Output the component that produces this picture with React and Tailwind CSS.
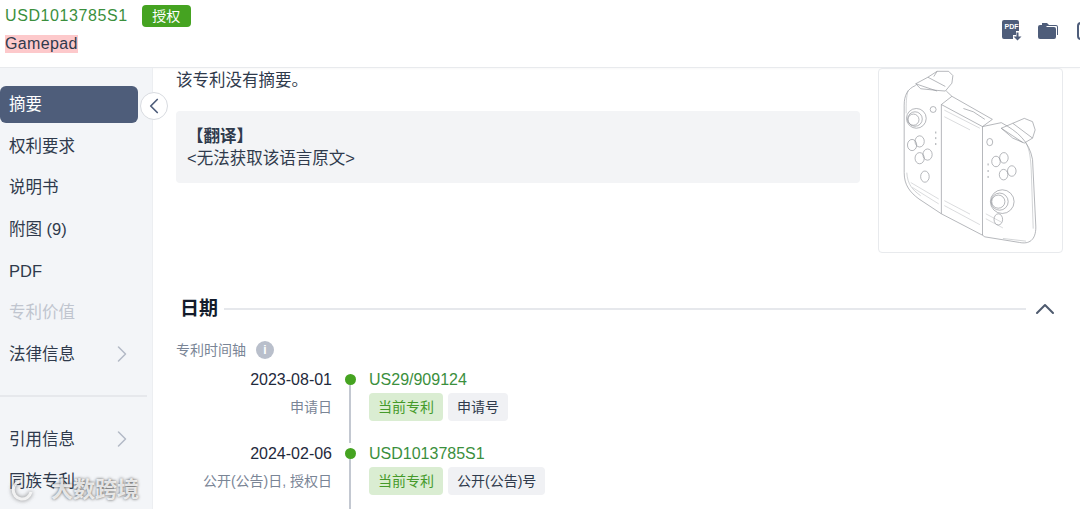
import { ChevronLeft, ChevronRight, ChevronUp } from 'lucide-react'

const navTop = [
    { label: '摘要', active: true },
    { label: '权利要求' },
    { label: '说明书' },
    { label: '附图 (9)' },
    { label: 'PDF' },
    { label: '专利价值', disabled: true },
    { label: '法律信息', arrow: true },
]

const timeline = [
    { date: '2023-08-01', type: '申请日', number: 'US29/909124', tag: '申请号' },
    { date: '2024-02-06', type: '公开(公告)日, 授权日', number: 'USD1013785S1', tag: '公开(公告)号' },
]

const NavItem = ({ item }) => {
    let color = 'text-[#2f3a4c]'
    if (item.active) color = 'bg-[#4e5d7a] text-white'
    if (item.disabled) color = 'text-[#c0c5cf]'
    return (
        <div className={`flex h-[37px] w-[138px] shrink-0 items-center justify-between rounded-md pl-[9px] pr-[2px] text-[16.5px] ${color}`}>
            <span>{item.label}</span>
            {item.arrow && <ChevronRight className="h-7 w-7 text-[#b4bac6]" strokeWidth={1.3} />}
        </div>
    )
}

const PdfIcon = () => (
    <svg width="20" height="21" viewBox="0 0 20 21">
        <path d="M2 0h13a2 2 0 0 1 2 2v9h-3v4h-3v4H2a2 2 0 0 1-2-2V2a2 2 0 0 1 2-2z" fill="#4e5d7a" />
        <text x="2.5" y="8.5" fill="#fff" fontSize="7" fontWeight="700" fontFamily="Liberation Sans, sans-serif">PDF</text>
        <path d="M14.5 12.5h2v4h3l-4 4-4-4h3z" fill="#4e5d7a" />
    </svg>
)

const FolderIcon = () => (
    <svg width="20" height="18" viewBox="0 0 20 18">
        <path d="M4 1h5l2 2h7a2 2 0 0 1 2 2v8h-1V5a1 1 0 0 0-1-1H4z" fill="#4e5d7a" />
        <path d="M2 3h5l2 2h7a2 2 0 0 1 2 2v8a2 2 0 0 1-2 2H2a2 2 0 0 1-2-2V5a2 2 0 0 1 2-2z" fill="#4e5d7a" />
    </svg>
)

const Gamepad = () => (
    <svg width="183" height="182" viewBox="25 25 553 553" fill="none" stroke="#8f9399" strokeWidth="2" strokeLinejoin="round">
        {/* left grip */}
        <path d="M135 75C110 85 100 105 100 135L100 340C100 378 118 400 145 420L213 465L213 133L245 108L228 92" />
        <path d="M112 90C106 110 106 130 106 160M108 340C110 375 125 392 150 410" strokeWidth="1.2" />
        <path d="M125 385L205 435M120 370L205 420" strokeWidth="1" />
        {/* center */}
        <path d="M213 133L338 200L338 530L213 465" />
        <path d="M245 108L368 178L338 200M280 145L310 155L345 178" />
        <path d="M222 150L330 205M222 170L300 210M222 440L330 498M222 425L300 466" strokeWidth="1" />
        {/* right grip */}
        <path d="M338 200L395 188C445 215 480 245 490 300L500 505C500 545 480 558 450 552L345 535L338 530" />
        <path d="M470 250C482 270 484 300 486 330L492 510M400 540L470 548" strokeWidth="1.2" />
        <path d="M348 480L400 508M348 465L395 490" strokeWidth="1" />
        {/* triggers */}
        <path d="M135 70L172 50L200 32L235 32L248 45L245 68L225 92L200 90L150 85Z" />
        <path d="M172 50L225 78M135 70L200 92M200 32L190 48" />
        <path d="M395 205L430 190L465 175L490 185L498 210L490 235L465 250L430 235Z" />
        <path d="M395 205L460 248M430 190L490 235" />
        {/* left stick */}
        <circle cx="137" cy="175" r="30" />
        <circle cx="133" cy="177" r="22" />
        <circle cx="128" cy="179" r="17" />
        <circle cx="188" cy="148" r="9" />
        {/* dpad */}
        <ellipse cx="147" cy="245" rx="14" ry="17" />
        <ellipse cx="124" cy="256" rx="14" ry="17" />
        <ellipse cx="171" cy="285" rx="14" ry="17" />
        <ellipse cx="147" cy="296" rx="14" ry="17" />
        <ellipse cx="163" cy="352" rx="13" ry="17" />
        <path d="M196 215v6M196 232v6M196 250v6" strokeWidth="2.5" />
        {/* right buttons */}
        <ellipse cx="360" cy="247" rx="9" ry="11" />
        <ellipse cx="379" cy="306" rx="13" ry="16" />
        <ellipse cx="403" cy="295" rx="13" ry="16" />
        <ellipse cx="402" cy="346" rx="13" ry="16" />
        <ellipse cx="427" cy="335" rx="13" ry="16" />
        <path d="M355 312v6M355 332v6M355 350v6" strokeWidth="2.5" />
        {/* right stick */}
        <circle cx="398" cy="428" r="36" />
        <circle cx="390" cy="428" r="26" />
        <circle cx="386" cy="428" r="20" />
        <ellipse cx="386" cy="482" rx="13" ry="17" />
    </svg>
)

const TimelineRow = ({ row }) => (
    <div className="flex h-[74px]">
        <div className="w-[156px] shrink-0 text-right">
            <div className="text-base leading-[22px] text-[#1f2a3c]">{row.date}</div>
            <div className="mt-[6px] text-sm leading-[20px] text-[#7a8596]">{row.type}</div>
        </div>
        <div className="flex w-[36px] shrink-0 flex-col items-center pt-[5px]">
            <div className="h-[11px] w-[11px] shrink-0 rounded-full bg-[#45a321]" />
            <div className="w-[2px] flex-1 bg-[#c3c8d1]" />
        </div>
        <div className="ml-[1px]">
            <div className="text-base leading-[22px] text-[#3b8f3d]">{row.number}</div>
            <div className="mt-[2px] flex gap-[5px] text-sm">
                <span className="flex h-[28px] items-center rounded bg-[#daedd2] px-[9px] text-[#459a2a]">当前专利</span>
                <span className="flex h-[28px] items-center rounded bg-[#f0f1f4] px-[9px] text-[#2f3a4c]">{row.tag}</span>
            </div>
        </div>
    </div>
)

export default function App() {
    return (
        <div className="relative flex h-[509px] w-[1080px] flex-col overflow-hidden bg-white font-['Liberation_Sans','Noto_Sans_CJK_SC',sans-serif]">
            <header className="flex h-[68px] shrink-0 justify-between overflow-hidden border-b border-[#e8eaed] pl-[5px] shadow-[0_1px_2px_rgba(0,0,0,0.03)]">
                <div>
                    <div className="flex h-[32px] items-center">
                        <span className="text-base tracking-[0.6px] text-[#3b8f3d]">USD1013785S1</span>
                        <span className="ml-[14px] flex h-[22px] w-[49px] items-center justify-center rounded-sm bg-[#45a321] text-sm text-white">授权</span>
                    </div>
                    <div className="mt-[3px] w-fit bg-[#fdc9cb] text-base leading-[18px] tracking-[0.35px] text-[#2f3a4c]">Gamepad</div>
                </div>
                <div className="mr-[-17px] flex items-center gap-[16px] pb-[6px]">
                    <PdfIcon />
                    <FolderIcon />
                    <div className="ml-[3px] h-[18px] w-[20px] rounded-sm border-2 border-[#4e5d7a]" />
                </div>
            </header>
            <div className="flex min-h-0 flex-1">
                <aside className="flex w-[153px] shrink-0 flex-col overflow-hidden border-r border-[#eceef1] bg-[#f3f5f8] pt-[18px]">
                    <div className="flex flex-col gap-[4.6px]">
                        {navTop.map(item => <NavItem key={item.label} item={item} />)}
                    </div>
                    <div className="mt-[22px] mb-[24px] h-[2px] w-[147px] shrink-0 bg-[#e6e8ec]" />
                    <div className="flex flex-col gap-[5px]">
                        <NavItem item={{ label: '引用信息', arrow: true }} />
                        <NavItem item={{ label: '同族专利' }} />
                    </div>
                </aside>
                <main className="min-w-0 flex-1 pl-[23px]">
                    <div className="flex">
                        <div className="w-[684px] shrink-0">
                            <p className="h-[43px] pt-[1px] text-[16.5px] leading-[22px] text-[#2f3a4c]">该专利没有摘要。</p>
                            <div className="h-[72px] rounded bg-[#f3f4f6] px-[11px] pt-[14px] text-[16.5px] leading-[22px] text-[#2f3a4c]">
                                <div className="font-bold">【翻译】</div>
                                <div>&lt;无法获取该语言原文&gt;</div>
                            </div>
                        </div>
                        <div className="ml-[18px] h-[185px] w-[185px] shrink-0 rounded border border-[#e8eaed]">
                            <Gamepad />
                        </div>
                    </div>
                    <div className="mt-[44px] flex h-[24px] items-center pl-[4px] pr-[19px]">
                        <h2 className="text-[19px] font-bold text-[#141c2b]">日期</h2>
                        <div className="ml-[6px] h-[2px] flex-1 bg-[#e6e8ec]" />
                        <ChevronUp className="ml-[3px] h-8 w-8 text-[#4e5a6e]" strokeWidth={1.5} />
                    </div>
                    <div className="mt-[18px] flex h-[22px] items-center gap-[10px] text-sm text-[#7a8596]">
                        <span>专利时间轴</span>
                        <span className="flex h-[18px] w-[18px] items-center justify-center rounded-full bg-[#b9bfcb] text-xs font-bold text-white">i</span>
                    </div>
                    <div className="mt-[8px]">
                        {timeline.map(row => <TimelineRow key={row.date} row={row} />)}
                    </div>
                </main>
            </div>
            {/* collapse button on the sidebar edge */}
            <button className="absolute left-[140px] top-[92px] flex h-[28px] w-[28px] items-center justify-center rounded-full border border-[#d8dbe0] bg-white text-[#4e5d7a]">
                <ChevronLeft className="h-[26px] w-[26px]" strokeWidth={1.6} />
            </button>
            {/* watermark */}
            <div className="absolute left-[10px] top-[475px] flex items-center gap-[17px] text-white/80 [text-shadow:0_0_3px_rgba(60,60,60,0.9)]">
                <svg className="drop-shadow-[0_0_2px_rgba(60,60,60,0.8)]" width="24" height="26" viewBox="0 0 24 26" fill="none" stroke="#fff" strokeOpacity="0.8" strokeWidth="3">
                    <path d="M12 4a9 9 0 1 0 9 11" />
                </svg>
                <span className="text-[22px] font-bold leading-[30px]">大数跨境</span>
            </div>
        </div>
    )
}
